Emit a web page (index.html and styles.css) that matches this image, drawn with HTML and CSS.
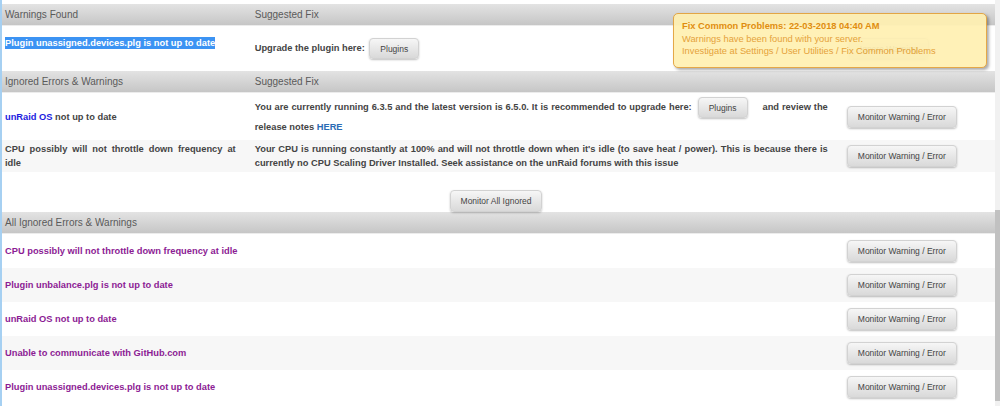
FILE: index.html
```html
<!DOCTYPE html>
<html lang="en">
<head>
	<meta charset="UTF-8"/>
	<title>Fix Common Problems</title>
	<link rel="stylesheet" href="styles.css">
</head>
<body>
<div class="page">
	<div class="content">
		<table class="probs">
			<tr class="head"><td>Warnings Found</td><td>Suggested Fix</td><td></td></tr>
			<tr class="first">
				<td class="top"><span class="sel">Plugin unassigned.devices.plg is not up to date</span></td>
				<td>Upgrade the plugin here: <button class="btn">Plugins</button></td>
				<td><button class="btn">Ignore Warning</button></td>
			</tr>
			<tr class="head"><td>Ignored Errors &amp; Warnings</td><td>Suggested Fix</td><td></td></tr>
			<tr class="tall">
				<td><span class="os">unRaid OS</span> not up to date</td>
				<td>You are currently running 6.3.5 and the latest version is 6.5.0. It is recommended to upgrade here: <button class="btn inl">Plugins</button> and review the release notes <span class="link">HERE</span></td>
				<td><button class="btn">Monitor Warning / Error</button></td>
			</tr>
			<tr class="alt">
				<td>CPU possibly will not throttle down frequency at idle</td>
				<td>Your CPU is running constantly at 100% and will not throttle down when it's idle (to save heat / power). This is because there is currently no CPU Scaling Driver Installed. Seek assistance on the unRaid forums with this issue</td>
				<td><button class="btn">Monitor Warning / Error</button></td>
			</tr>
		</table>
		<p class="all"><button class="btn">Monitor All Ignored</button></p>
		<table class="probs">
			<tr class="head"><td>All Ignored Errors &amp; Warnings</td><td></td><td></td></tr>
			<tr><td class="ign">CPU possibly will not throttle down frequency at idle</td><td></td><td><button class="btn">Monitor Warning / Error</button></td></tr>
			<tr class="alt"><td class="ign">Plugin unbalance.plg is not up to date</td><td></td><td><button class="btn">Monitor Warning / Error</button></td></tr>
			<tr><td class="ign">unRaid OS not up to date</td><td></td><td><button class="btn">Monitor Warning / Error</button></td></tr>
			<tr class="alt"><td class="ign">Unable to communicate with GitHub.com</td><td></td><td><button class="btn">Monitor Warning / Error</button></td></tr>
			<tr><td class="ign">Plugin unassigned.devices.plg is not up to date</td><td></td><td><button class="btn">Monitor Warning / Error</button></td></tr>
		</table>
	</div>
	<div class="scroll"><div class="thumb"></div></div>
</div>
<div class="notice">
	<div class="notice_title">Fix Common Problems: 22-03-2018 04:40 AM</div>
	<div>Warnings have been found with your server.</div>
	<div>Investigate at Settings / User Utilities / Fix Common Problems</div>
</div>
</body>
</html>
```

FILE: styles.css
```css
*{margin:0;padding:0;}
body{font:bold 9.3px/14px "Liberation Sans",Arial,sans-serif;color:#444;background:#fff;}
.page{display:flex;height:406px;overflow:hidden;}
.content{flex:1;border-left:2px solid #a6d0f2;padding-top:4px;}
.probs{width:100%;border-collapse:collapse;table-layout:fixed;}
.probs td{padding:3px 15px 3px 3px;text-align:justify;vertical-align:middle;}
.probs td:nth-child(1){width:25%;padding-right:16px;}
.probs td:nth-child(2){width:60%;}
.probs td:nth-child(3){width:15%;padding:6px 0 6px 4px;line-height:0;}
.probs tr.head td{font-weight:normal;font-size:10px;line-height:21px;height:21px;padding:0 3px;color:#5a5a5a;background:linear-gradient(#e3e3e3,#c6c6c6);border-bottom:1px solid #ececec;}
.probs tr.first td{padding-top:12px;padding-bottom:12px;}
.probs tr.first td.top{vertical-align:top;padding-top:10px;}
.probs tr.tall td{padding-top:4px;padding-bottom:4px;line-height:18px;}
.probs tr.alt td{background:#f7f7f7;}
.probs tr.tall+tr.alt td{padding-top:2px;padding-bottom:2px;}
.probs tr.tall+tr.alt td:nth-child(3){padding-top:5px;padding-bottom:5px;}
.probs td.ign{white-space:nowrap;overflow:visible;}
.sel{background:#3c93f3;color:#fff;padding:1px 0;}
.os{color:#1c1ce0;}
.link{color:#2b6cb5;}
.ign{color:#8c1c94;}
.btn{display:inline-block;vertical-align:middle;font:normal 8.5px "Liberation Sans",Arial,sans-serif;color:#444;height:22px;padding:0 10px;border:1px solid #d2d2d2;border-radius:4px;background:linear-gradient(#f6f6f6,#d9d9d9);box-shadow:0 1px 2px rgba(0,0,0,.25);cursor:pointer;}
.probs tr.first .btn,.btn.inl{height:21px;margin:0 2px;}
.btn.inl{margin:0 12px 0 3px;}
.all{text-align:center;padding-top:18px;padding-right:5px;line-height:0;}
.scroll{width:5px;background:#f1f1f1;}
.thumb{height:191px;margin-top:210px;background:#c1c1c1;}
.notice{position:absolute;left:673px;top:13px;width:296px;height:45px;padding:4px 8px;background:#fff0b2;border:1px solid #e3a23b;border-radius:5px;box-shadow:2px 2px 3px rgba(0,0,0,.35);color:#e49b2c;font-weight:normal;font-size:9.3px;line-height:12.5px;opacity:.93;}
.notice_title{font-weight:bold;color:#e08700;margin-top:2px;}
```
